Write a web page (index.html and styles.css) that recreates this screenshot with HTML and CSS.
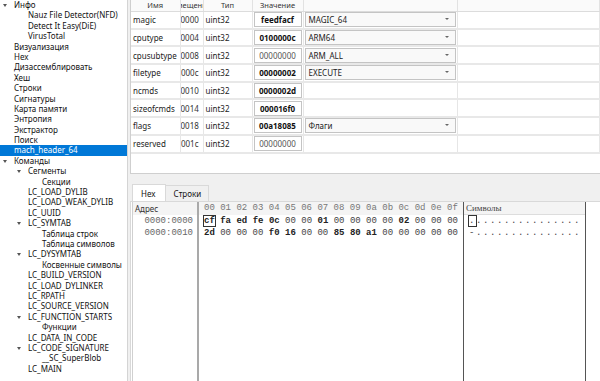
FILE: index.html
```html
<!DOCTYPE html>
<html lang="ru">
<head>
    <meta charset="UTF-8">
    <title>mach_header_64</title>
    <link rel="stylesheet" href="styles.css">
</head>
<body>
    <div class="app">
        <ul class="tree">
            <li class="l0 open">Инфо</li>
            <li class="l1">Nauz File Detector(NFD)</li>
            <li class="l1">Detect It Easy(DiE)</li>
            <li class="l1">VirusTotal</li>
            <li class="l0">Визуализация</li>
            <li class="l0">Hex</li>
            <li class="l0">Дизассемблировать</li>
            <li class="l0">Хеш</li>
            <li class="l0">Строки</li>
            <li class="l0">Сигнатуры</li>
            <li class="l0">Карта памяти</li>
            <li class="l0">Энтропия</li>
            <li class="l0">Экстрактор</li>
            <li class="l0">Поиск</li>
            <li class="l0 current">mach_header_64</li>
            <li class="l0 open">Команды</li>
            <li class="l1 open">Сегменты</li>
            <li class="l2">Секции</li>
            <li class="l1">LC_LOAD_DYLIB</li>
            <li class="l1">LC_LOAD_WEAK_DYLIB</li>
            <li class="l1">LC_UUID</li>
            <li class="l1 open">LC_SYMTAB</li>
            <li class="l2">Таблица строк</li>
            <li class="l2">Таблица символов</li>
            <li class="l1 open">LC_DYSYMTAB</li>
            <li class="l2">Косвенные символы</li>
            <li class="l1">LC_BUILD_VERSION</li>
            <li class="l1">LC_LOAD_DYLINKER</li>
            <li class="l1">LC_RPATH</li>
            <li class="l1">LC_SOURCE_VERSION</li>
            <li class="l1 open">LC_FUNCTION_STARTS</li>
            <li class="l2">Функции</li>
            <li class="l1">LC_DATA_IN_CODE</li>
            <li class="l1 open">LC_CODE_SIGNATURE</li>
            <li class="l2">__SC_SuperBlob</li>
            <li class="l1">LC_MAIN</li>
        </ul>

        <div class="main">
            <div class="fields">
                <table class="grid">
                    <colgroup>
                        <col class="c-name">
                        <col class="c-off">
                        <col class="c-type">
                        <col class="c-val">
                        <col class="c-info">
                        <col>
                    </colgroup>
                    <thead>
                        <tr>
                            <th><div class="hc">Имя</div></th>
                            <th><div class="hc">Смещение</div></th>
                            <th><div class="hc">Тип</div></th>
                            <th><div class="hc">Значение</div></th>
                            <th></th>
                            <th></th>
                        </tr>
                    </thead>
                    <tbody>
                        <tr>
                            <td class="name">magic</td><td class="off">0000</td><td class="type">uint32</td>
                            <td><div class="val b">feedfacf</div></td>
                            <td><div class="combo">MAGIC_64</div></td><td></td>
                        </tr>
                        <tr>
                            <td class="name">cputype</td><td class="off">0004</td><td class="type">uint32</td>
                            <td><div class="val b">0100000c</div></td>
                            <td><div class="combo">ARM64</div></td><td></td>
                        </tr>
                        <tr>
                            <td class="name">cpusubtype</td><td class="off">0008</td><td class="type">uint32</td>
                            <td><div class="val">00000000</div></td>
                            <td><div class="combo">ARM_ALL</div></td><td></td>
                        </tr>
                        <tr>
                            <td class="name">filetype</td><td class="off">000c</td><td class="type">uint32</td>
                            <td><div class="val b">00000002</div></td>
                            <td><div class="combo">EXECUTE</div></td><td></td>
                        </tr>
                        <tr>
                            <td class="name">ncmds</td><td class="off">0010</td><td class="type">uint32</td>
                            <td><div class="val b">0000002d</div></td>
                            <td></td><td></td>
                        </tr>
                        <tr>
                            <td class="name">sizeofcmds</td><td class="off">0014</td><td class="type">uint32</td>
                            <td><div class="val b">000016f0</div></td>
                            <td></td><td></td>
                        </tr>
                        <tr>
                            <td class="name">flags</td><td class="off">0018</td><td class="type">uint32</td>
                            <td><div class="val b">00a18085</div></td>
                            <td><div class="combo">Флаги</div></td><td></td>
                        </tr>
                        <tr>
                            <td class="name">reserved</td><td class="off">001c</td><td class="type">uint32</td>
                            <td><div class="val">00000000</div></td>
                            <td></td><td></td>
                        </tr>
                    </tbody>
                </table>
            </div>

            <div class="splitter"></div>

            <div class="tabs">
                <div class="tabbar">
                    <span class="tab active">Hex</span>
                    <span class="tab">Строки</span>
                </div>
                <div class="pane">
                    <div class="hex">
                        <div class="col addr">
                            <div class="head">Адрес</div>
                            <div class="row">0000:0000</div>
                            <div class="row">0000:0010</div>
                        </div>
                        <div class="col bytes">
                            <div class="head">00 01 02 03 04 05 06 07 08 09 0a 0b 0c 0d 0e 0f</div>
                            <div class="row"><b class="cur">cf</b> <b>fa</b> <b>ed</b> <b>fe</b> <b>0c</b> 00 00 <b>01</b> 00 00 00 00 <b>02</b> 00 00 00</div>
                            <div class="row"><b>2d</b> 00 00 00 <b>f0</b> <b>16</b> 00 00 <b>85</b> <b>80</b> <b>a1</b> 00 00 00 00 00</div>
                        </div>
                        <div class="col chars">
                            <div class="head">Символы</div>
                            <div class="row"><span class="cur">.</span>...............</div>
                            <div class="row">-...............</div>
                        </div>
                        <div class="col rest"></div>
                    </div>
                </div>
            </div>
        </div>
    </div>
</body>
</html>
```

FILE: styles.css
```css
* {
    padding: 0;
    margin: 0;
    box-sizing: border-box;
}
html, body {
    height: 100%;
}
body {
    background: #f0f0f0;
    font-family: "Noto Sans", "Open Sans", sans-serif;
    font-size: 8px;
    color: #111;
}
.app {
    display: flex;
    gap: 2px;
    height: 100%;
}

/* дерево слева */
.tree {
    width: 128px;
    flex: none;
    background: #fff;
    border-right: 1px solid #d4d4d4;
    list-style: none;
    overflow: hidden;
}
.tree li {
    position: relative;
    height: 10.4px;
    line-height: 10.4px;
    white-space: nowrap;
}
.tree .l0 { padding-left: 14px; }
.tree .l1 { padding-left: 28px; }
.tree .l2 { padding-left: 42px; }
.tree .open::before {
    content: "";
    position: absolute;
    top: 4px;
    margin-left: -11px;
    border-left: 2.5px solid transparent;
    border-right: 2.5px solid transparent;
    border-top: 3px solid #555;
}
.tree .current {
    background: #0078d7;
    color: #fff;
}

.main {
    flex: 1;
    display: flex;
    flex-direction: column;
    min-width: 0;
}

/* таблица полей */
.fields {
    height: 174px;
    flex: none;
    background: #fff;
    border: 1px solid #cfcfcf;
    border-top: none;
    border-right: none;
    overflow: hidden;
}
.grid {
    width: 100%;
    table-layout: fixed;
    border-collapse: collapse;
}
.c-name { width: 49px; }
.c-off { width: 23px; }
.c-type { width: 49px; }
.c-val { width: 51px; }
.c-info { width: 154px; }
.grid th {
    height: 11px;
    font-weight: normal;
    font-size: 7.5px;
    color: #333;
    background: #fafafa;
    border-right: 1px solid #e2e2e2;
    border-bottom: 1px solid #dcdcdc;
    padding: 0;
}
.hc {
    display: flex;
    justify-content: center;
    overflow: hidden;
    white-space: nowrap;
    line-height: 10px;
}
.grid td {
    height: 17.7px;
    padding: 0;
    border-right: 1px solid #e6e6e6;
    border-bottom: 2px solid #e8e8e8;
    white-space: nowrap;
    overflow: hidden;
    color: #222;
}
.grid .name { padding-left: 2px; }
.grid .off { text-align: right; padding-right: 4px; color: #333; }
.grid .type { padding-left: 2px; }
.val {
    height: 15px;
    margin: 0 1px;
    border: 1px solid #c4c4c4;
    line-height: 13px;
    text-align: center;
    color: #555;
}
.val.b {
    font-weight: bold;
    color: #111;
}
.combo {
    position: relative;
    height: 15px;
    margin: 0 1px;
    padding-left: 3px;
    border: 1px solid #c4c4c4;
    background: #f9f9f9;
    line-height: 13px;
}
.combo::after {
    content: "";
    position: absolute;
    right: 6px;
    top: 5px;
    border-left: 2px solid transparent;
    border-right: 2px solid transparent;
    border-top: 2.5px solid #666;
}

.splitter {
    height: 10px;
    flex: none;
}

/* вкладки hex */
.tabs {
    flex: 1;
    display: flex;
    flex-direction: column;
}
.tabbar {
    display: flex;
    height: 17px;
    padding-left: 2px;
}
.tab {
    padding: 0 7px 0 8px;
    line-height: 15px;
    border: 1px solid #d9d9d9;
    border-bottom: none;
    background: #f0f0f0;
    margin-top: 1px;
}
.tab.active {
    background: #fff;
    margin-top: 0;
    line-height: 17px;
    padding: 0 9px 0 8px;
}
.tab + .tab {
    border-left: none;
}
.pane {
    flex: 1;
    background: #fff;
    border: 1px solid #d9d9d9;
    border-right: none;
    border-bottom: none;
    padding-left: 1px;
}
.hex {
    display: flex;
    height: 100%;
    border-left: 1px solid #d0d0d0;
    font-family: "Liberation Mono", "DejaVu Sans Mono", monospace;
    font-size: 9px;
}
.hex .col {
    flex: none;
}
.hex .head {
    height: 13px;
    line-height: 13px;
    background: #f4f4f4;
    color: #777;
    white-space: nowrap;
}
.hex .row {
    height: 12px;
    line-height: 12px;
    white-space: nowrap;
    color: #444;
}
.hex b {
    font-weight: bold;
    color: #222;
}
.addr {
    width: 66px;
    border-right: 2px solid #a9a9a9;
}
.addr .head {
    padding-left: 2px;
    font-family: "Noto Sans", sans-serif;
    font-size: 8px;
    color: #333;
}
.addr .row {
    text-align: right;
    padding-right: 4px;
    color: #666;
}
.bytes {
    width: 265px;
    border-right: 1px solid #555;
}
.bytes .head,
.bytes .row {
    padding-left: 5px;
}
.chars {
    width: 122px;
    border-right: 1px solid #555;
    letter-spacing: 1.6px;
}
.chars .head {
    padding-left: 2px;
    letter-spacing: 0;
    font-family: "Liberation Serif", serif;
    color: #444;
    border-bottom: 1px solid #ddd;
}
.chars .row {
    padding-left: 5px;
}
.cur {
    outline: 1px solid #333;
    outline-offset: 0;
}
.rest {
    flex: 1;
}
```
